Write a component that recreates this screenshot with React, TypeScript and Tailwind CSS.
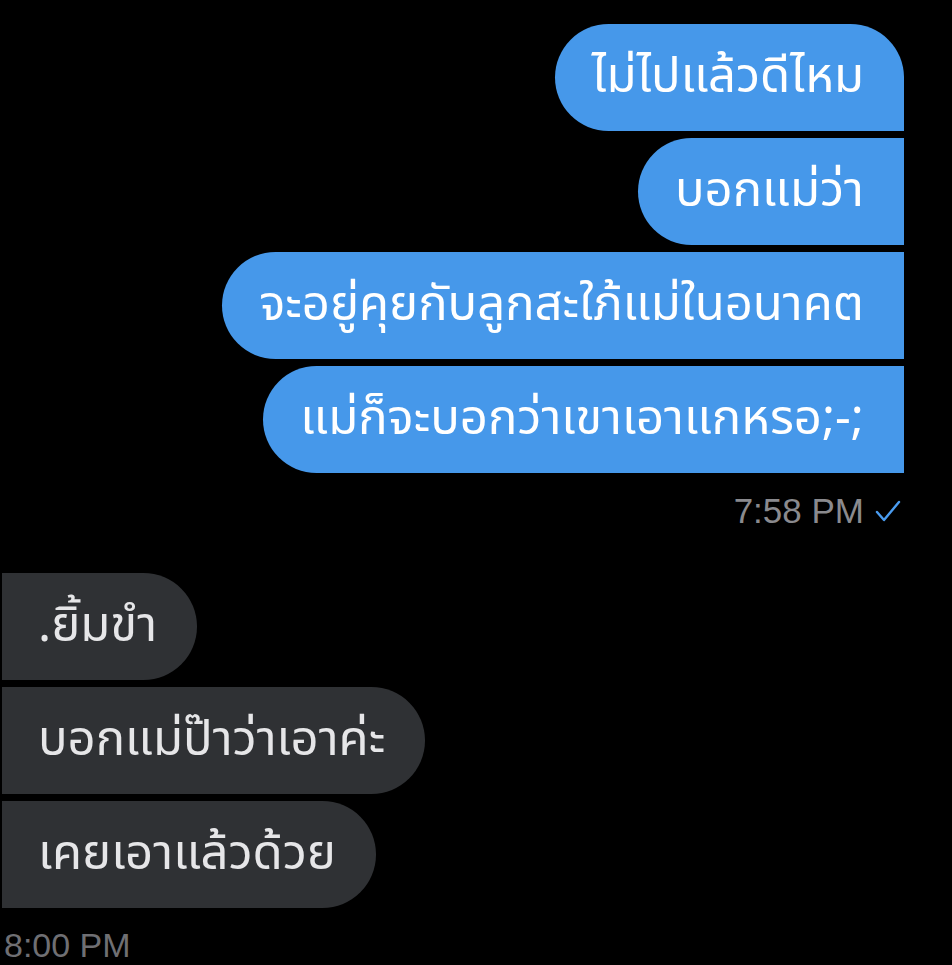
import React from "react";

const thaiFont = {
  fontFamily: '"Noto Sans Thai", "Noto Sans Thai Looped", "Noto Sans", "DejaVu Sans", sans-serif',
};

function Check() {
  return (
    <svg width="28" height="24" viewBox="0 0 28 24" fill="none">
      <path d="M3 13 L10 21 L25 3" stroke="#4a9cf0" strokeWidth="2.4" strokeLinecap="round" strokeLinejoin="round" />
    </svg>
  );
}

export default function App() {
  const sent = ["ไม่ไปแล้วดีไหม", "บอกแม่ว่า", "จะอยู่คุยกับลูกสะใภ้แม่ในอนาคต", "แม่ก็จะบอกว่าเขาเอาแกหรอ;-;"];
  const recv = [".ยิ้มขำ", "บอกแม่ป๊าว่าเอาค่ะ", "เคยเอาแล้วด้วย"];
  return (
    <div className="w-[952px] h-[965px] bg-black overflow-hidden" style={thaiFont}>
      <div className="flex flex-col items-end pr-[48px] pt-[24px] gap-[7px]">
        {sent.map((t, i) => (
          <div
            key={i}
            className={`h-[107px] flex items-center pl-[37px] pr-[40px] bg-[#4698ea] text-white text-[49px] rounded-l-[54px] ${i === 0 ? "rounded-tr-[54px]" : ""}`}
          >
            <span className="whitespace-nowrap leading-none">{t}</span>
          </div>
        ))}
      </div>
      <div className="flex justify-end items-center pr-[50px] mt-[20px] gap-[10px] text-[35px] text-[#8a8a8e]" style={{ fontFamily: '"Liberation Sans", sans-serif' }}>
        <span className="leading-none">7:58 PM</span>
        <Check />
      </div>
      <div className="flex flex-col items-start pl-[2px] mt-[45px] gap-[7px]">
        {recv.map((t, i) => (
          <div
            key={i}
            className="h-[107px] flex items-center pl-[36px] pr-[40px] bg-[#2f3134] text-[#e6e6e8] text-[49px] rounded-r-[54px]"
          >
            <span className="whitespace-nowrap leading-none">{t}</span>
          </div>
        ))}
      </div>
      <div className="pl-[4px] mt-[20px] text-[34px] text-[#6f6f73] leading-none" style={{ fontFamily: '"Liberation Sans", sans-serif' }}>
        8:00 PM
      </div>
    </div>
  );
}
